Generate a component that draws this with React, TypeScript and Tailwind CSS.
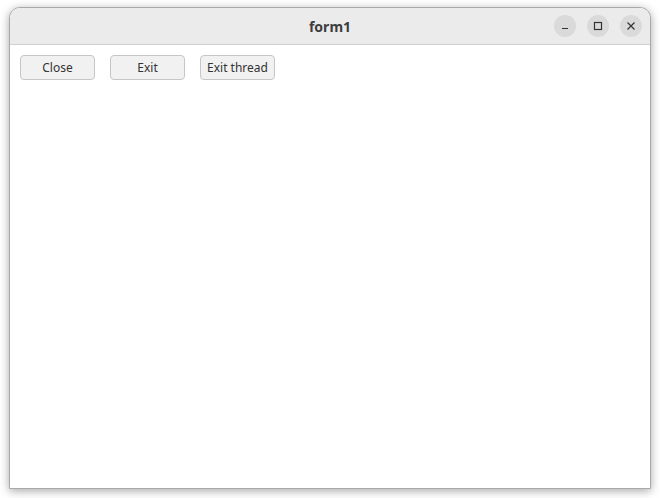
export default function App() {
  return (
    <div
      className="h-[498px] w-[660px] bg-white pl-[9px] pt-[7px]"
      style={{ fontFamily: '"Noto Sans", "DejaVu Sans", sans-serif' }}
    >
      {/* Window */}
      <div className="flex h-[482px] w-[642px] flex-col overflow-hidden rounded-t-[11px] border border-[#a9a9a9] bg-white shadow-[0_2px_10px_rgba(0,0,0,0.35)]">
        {/* Title bar */}
        <div className="relative flex h-[37px] shrink-0 items-center justify-center border-b border-[#cfcfcf] bg-[#ebebeb]">
          <span className="text-[14px] font-bold text-[#3d3d3d]">form1</span>
          <div className="absolute right-[8px] top-[7px] flex gap-[11px]">
            <button className="flex h-[22px] w-[22px] items-center justify-center rounded-full bg-[#dadada]">
              <svg width="10" height="10" viewBox="0 0 10 10">
                <path d="M2 7.5h6" stroke="#333" strokeWidth="1.2" />
              </svg>
            </button>
            <button className="flex h-[22px] w-[22px] items-center justify-center rounded-full bg-[#dadada]">
              <svg width="10" height="10" viewBox="0 0 10 10">
                <rect x="1.5" y="1.5" width="7" height="7" fill="none" stroke="#333" strokeWidth="1.2" />
              </svg>
            </button>
            <button className="flex h-[22px] w-[22px] items-center justify-center rounded-full bg-[#dadada]">
              <svg width="10" height="10" viewBox="0 0 10 10">
                <path d="M1.5 1.5l7 7M8.5 1.5l-7 7" stroke="#333" strokeWidth="1.2" />
              </svg>
            </button>
          </div>
        </div>

        {/* Content */}
        <div className="flex gap-[15px] pl-[10px] pt-[10px]">
          {["Close", "Exit", "Exit thread"].map((label) => (
            <button
              key={label}
              className="h-[25px] w-[75px] rounded-[4px] border border-[#c6c6c6] bg-[#f1f1f1] text-[12px] text-[#333]"
            >
              {label}
            </button>
          ))}
        </div>
      </div>
    </div>
  );
}
